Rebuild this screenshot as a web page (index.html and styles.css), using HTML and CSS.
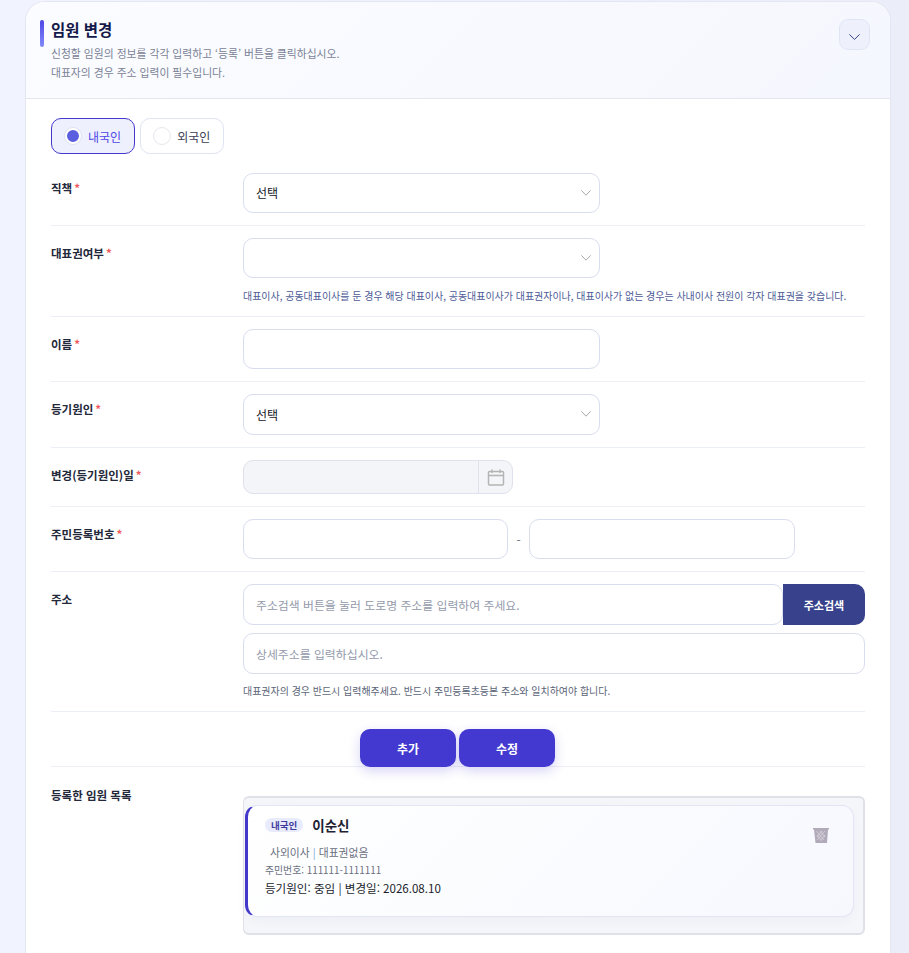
FILE: index.html
```html
<!DOCTYPE html>

<html lang="ko">
    <head>
        <meta charset="utf-8">
        <title>임원 변경</title>
        <link rel="stylesheet" href="styles.css">
    </head>

    <body>
        <section class="card">
            <header class="card-head">
                <div class="head-text">
                    <h2>임원 변경</h2>
                    <p>신청할 임원의 정보를 각각 입력하고 ‘등록’ 버튼을 클릭하십시오.</p>
                    <p>대표자의 경우 주소 입력이 필수입니다.</p>
                </div>
                <button class="toggle" type="button">
                    <svg width="11" height="6" viewBox="0 0 11 6"><path d="M.4.4l5.100 5 5.100-5" fill="none" stroke="#38428c" stroke-width="1"/></svg>
                </button>
            </header>

            <div class="card-body">
                <div class="radios">
                    <label class="radio on"><span class="dot"></span>내국인</label>
                    <label class="radio"><span class="dot"></span>외국인</label>
                </div>

                <div class="row">
                    <div class="label">직책<i>*</i></div>
                    <div class="field">
                        <div class="select">선택
                            <svg width="10" height="6" viewBox="0 0 10 6"><path d="M.4.4l4.600 4.800 4.600-4.800" fill="none" stroke="#a9a9a9" stroke-width="1"/></svg>
                        </div>
                    </div>
                </div>

                <div class="row">
                    <div class="label">대표권여부<i>*</i></div>
                    <div class="field">
                        <div class="select">
                            <svg width="10" height="6" viewBox="0 0 10 6"><path d="M.4.4l4.600 4.800 4.600-4.800" fill="none" stroke="#a9a9a9" stroke-width="1"/></svg>
                        </div>
                        <p class="hint blue">대표이사, 공동대표이사를 둔 경우 해당 대표이사, 공동대표이사가 대표권자이나, 대표이사가 없는 경우는 사내이사 전원이 각자 대표권을 갖습니다.</p>
                    </div>
                </div>

                <div class="row">
                    <div class="label">이름<i>*</i></div>
                    <div class="field"><input class="input half" type="text"></div>
                </div>

                <div class="row">
                    <div class="label">등기원인<i>*</i></div>
                    <div class="field">
                        <div class="select tall">선택
                            <svg width="10" height="6" viewBox="0 0 10 6"><path d="M.4.4l4.600 4.800 4.600-4.800" fill="none" stroke="#a9a9a9" stroke-width="1"/></svg>
                        </div>
                    </div>
                </div>

                <div class="row">
                    <div class="label">변경(등기원인)일<i>*</i></div>
                    <div class="field">
                        <div class="date">
                            <div class="date-value"></div>
                            <div class="date-icon">
                                <svg width="18" height="17" viewBox="0 0 18 17" fill="none" stroke="#b4b4b4" stroke-width="1.500"><rect x="1.500" y="2.500" width="15" height="13.500" rx="1"/><path d="M1.500 6.500h15M5 .5v3.500M13 .5v3.500"/></svg>
                            </div>
                        </div>
                    </div>
                </div>

                <div class="row">
                    <div class="label">주민등록번호<i>*</i></div>
                    <div class="field rrn">
                        <input class="input" type="text">
                        <span class="dash">-</span>
                        <input class="input" type="text">
                    </div>
                </div>

                <div class="row">
                    <div class="label">주소</div>
                    <div class="field">
                        <div class="addr">
                            <input class="input tall" type="text" placeholder="주소검색 버튼을 눌러 도로명 주소를 입력하여 주세요.">
                            <button class="addr-btn" type="button">주소검색</button>
                        </div>
                        <input class="input tall full" type="text" placeholder="상세주소를 입력하십시오.">
                        <p class="hint addr-hint">대표권자의 경우 반드시 입력해주세요. 반드시 주민등록초등본 주소와 일치하여야 합니다.</p>
                    </div>
                </div>

                <div class="actions">
                    <button class="action" type="button">추가</button>
                    <button class="action" type="button">수정</button>
                </div>

                <div class="row list-row">
                    <div class="label">등록한 임원 목록</div>
                    <div class="field">
                        <div class="list">
                            <div class="item">
                                <div class="item-main">
                                    <div class="item-title"><span class="badge">내국인</span><strong>이순신</strong></div>
                                    <div class="item-role">사외이사 <span>|</span> 대표권없음</div>
                                    <div class="item-id">주민번호: 111111-1111111</div>
                                    <div class="item-cause">등기원인: 중임 | 변경일: 2026.08.10</div>
                                </div>
                                <svg class="trash" width="16" height="15" viewBox="0 0 16 15"><path d="M0 0h16v1.500h-1l-1 13.500H2.500L1 1.500H0z" fill="#b0aab9"/><path d="M3.500 3l7.500 9M7 3l5 6M3.800 7l4.500 5.500M12 3l-8 9M9 3l-5 6M12 7l-4.500 5.500" stroke="#dedbe3" stroke-width=".7"/></svg>
                            </div>
                        </div>
                    </div>
                </div>
            </div>
        </section>
    </body>
</html>
```

FILE: styles.css
```css
* { box-sizing: border-box; }
body
{
    margin: 0; height: 953px; overflow: hidden; padding: 1px 18px 0 25px;
    background: linear-gradient(90deg, #f1f4fe, #ebeef9);
    font-family: "Noto Sans CJK KR", "Noto Sans", sans-serif; color: #1e2233;
}
p { margin: 0; }

.card
{
    background: #fff; border: 1px solid #e4e6f1; border-bottom: 0;
    border-radius: 20px 20px 0 0; overflow: hidden; height: 980px;
}
.card-head
{
    display: flex; justify-content: space-between; height: 97px;
    padding: 15px 20px 0 25px;
    background: linear-gradient(135deg, #fbfcff, #f5f7fe);
    border-bottom: 1px solid #e3e5f1;
}
.head-text { position: relative; }
.head-text::before
{
    content: ""; position: absolute; left: -11px; top: 3px; width: 4px; height: 27px;
    border-radius: 2px; background: linear-gradient(180deg, #4f46e5, #818cf8);
}
.card-head h2 { margin: 0 0 3px; font-size: 15.500px; line-height: 24px; font-weight: 700; color: #14194a; }
.card-head p { font-size: 10.800px; line-height: 18.500px; color: #7a8296; }
.toggle
{
    width: 31px; height: 31px; margin-top: 2px; padding: 5px 0 0; border: 1px solid #e0e5f6; border-radius: 9px;
    background: #eef1fc; display: flex; align-items: center; justify-content: center;
}

.card-body { padding: 19px 25px 0; }

.radios { display: flex; gap: 5px; margin-bottom: 7px; }
.radio
{
    display: flex; align-items: center; gap: 6px; height: 36px; padding: 0 13px 0 12px;
    border: 1px solid #dfe3f2; border-radius: 10px; background: #fff;
    font-size: 12px; color: #3a3f55;
}
.radio.on { border-color: #4338ca; background: #eef1fd; color: #4f46e5; }
.dot { width: 18px; height: 18px; border-radius: 50%; border: 1px solid #e6e7ee; background: #fff; }
.radio.on .dot { background: #5b5fdf; border: 2px solid #fff; box-shadow: 0 0 0 1px #dfe2f2; width: 16px; height: 16px; margin: 1px; }

.row { display: flex; padding: 12px 0; border-bottom: 1px solid #eceef7; }
.label { flex: 0 0 192px; font-size: 11.500px; line-height: 18px; font-weight: 700; color: #23283a; padding-top: 6px; }
.label i { color: #f05a5a; font-style: normal; margin-left: 2px; font-weight: 700; }
.field { flex: 1; min-width: 0; }

.select
{
    position: relative; width: 357px; height: 40px; padding: 0 0 2px 12px;
    display: flex; align-items: center;
    border: 1px solid #d9ddee; border-radius: 10px; background: #fff;
    font-size: 12px; color: #14161f;
}
.select svg { position: absolute; right: 8px; top: 16px; }
.select.tall { height: 41px; padding-bottom: 0; }

.input
{
    height: 40px; padding: 0 12px; border: 1px solid #d9ddee; border-radius: 10px; background: #fff;
    font-family: inherit; font-size: 11.880px; color: #1e2233; display: block; outline: none;
}
.input::placeholder { color: #949aab; }
.input.half { width: 357px; }
.input.tall { height: 41px; }
.input.full { width: 100%; }

.hint { margin-top: 10px; padding-bottom: 1px; font-size: 9.980px; line-height: 15px; color: #5b6478; white-space: nowrap; }
.hint.blue { color: #4c5a96; }
.hint.addr-hint { margin-top: 9px; }

.date { display: flex; width: 270px; height: 34px; border: 1px solid #dfe2ec; border-radius: 10px; background: #f4f5f9; overflow: hidden; }
.date-value { flex: 1; }
.date-icon { width: 34px; display: flex; align-items: center; justify-content: center; border-left: 1px solid #dfe2ec; }

.rrn { display: flex; align-items: center; }
.rrn .input { width: 265px; }
.rrn .input:last-child { width: 266px; }
.dash { width: 21px; text-align: center; font-size: 12px; color: #6b7280; }

.addr { display: flex; margin-bottom: 8px; }
.addr .input { flex: 1; min-width: 0; }
.addr-btn
{
    width: 82px; height: 41px; border: 0; border-radius: 0 10px 10px 0; background: #38428c;
    font-family: inherit; font-size: 11px; font-weight: 700; color: #fff;
}

.actions { display: flex; justify-content: center; gap: 3px; height: 55px; padding-top: 17px; padding-right: 1px; border-bottom: 1px solid #eceef7; }
.action
{
    width: 96px; height: 38px; border: 0; border-radius: 10px; background: #4338d0;
    font-family: inherit; font-size: 12px; font-weight: 700; color: #fff;
    box-shadow: 0 4px 12px rgba(67, 56, 208, .22);
}

.list-row { border-bottom: 0; padding-top: 17px; padding-bottom: 0; }
.list-row .label { padding-top: 2px; }
.list
{
    height: 139px; padding: 7px 9px 0 1px; margin-top: 12px;
    background: #f5f6fa; border: 1px solid #dfe0e8; border-width: 2px 2px 2px 1px; border-radius: 6px;
}
.item
{
    display: flex; justify-content: space-between; height: 112px; padding: 9px 24px 0 17px;
    background: linear-gradient(135deg, #fff, #f6f8fe);
    border: 1px solid #e1e5f4; border-left: 3px solid #4338ca; border-radius: 12px;
    box-shadow: 0 4px 12px rgba(30, 34, 80, .03);
}
.item-title { display: flex; align-items: center; gap: 9px; height: 20px; margin-bottom: 8px; }
.badge { padding: 0 6px; height: 14px; border-radius: 7px; background: #e8ebfb; font-size: 9.500px; line-height: 14px; font-weight: 700; color: #3f3a9c; }
.item-title strong { font-size: 13.500px; line-height: 20px; font-weight: 700; color: #1e2233; }
.item-role { padding-left: 5px; font-size: 10.800px; line-height: 18px; color: #6a6f80; }
.item-role span { color: #7aa7e0; }
.item-id { font-size: 9.850px; line-height: 18px; color: #6a6f80; }
.item-cause { font-size: 11.550px; line-height: 18px; color: #1a1d2b; }
.trash { margin-top: 13px; }
```
